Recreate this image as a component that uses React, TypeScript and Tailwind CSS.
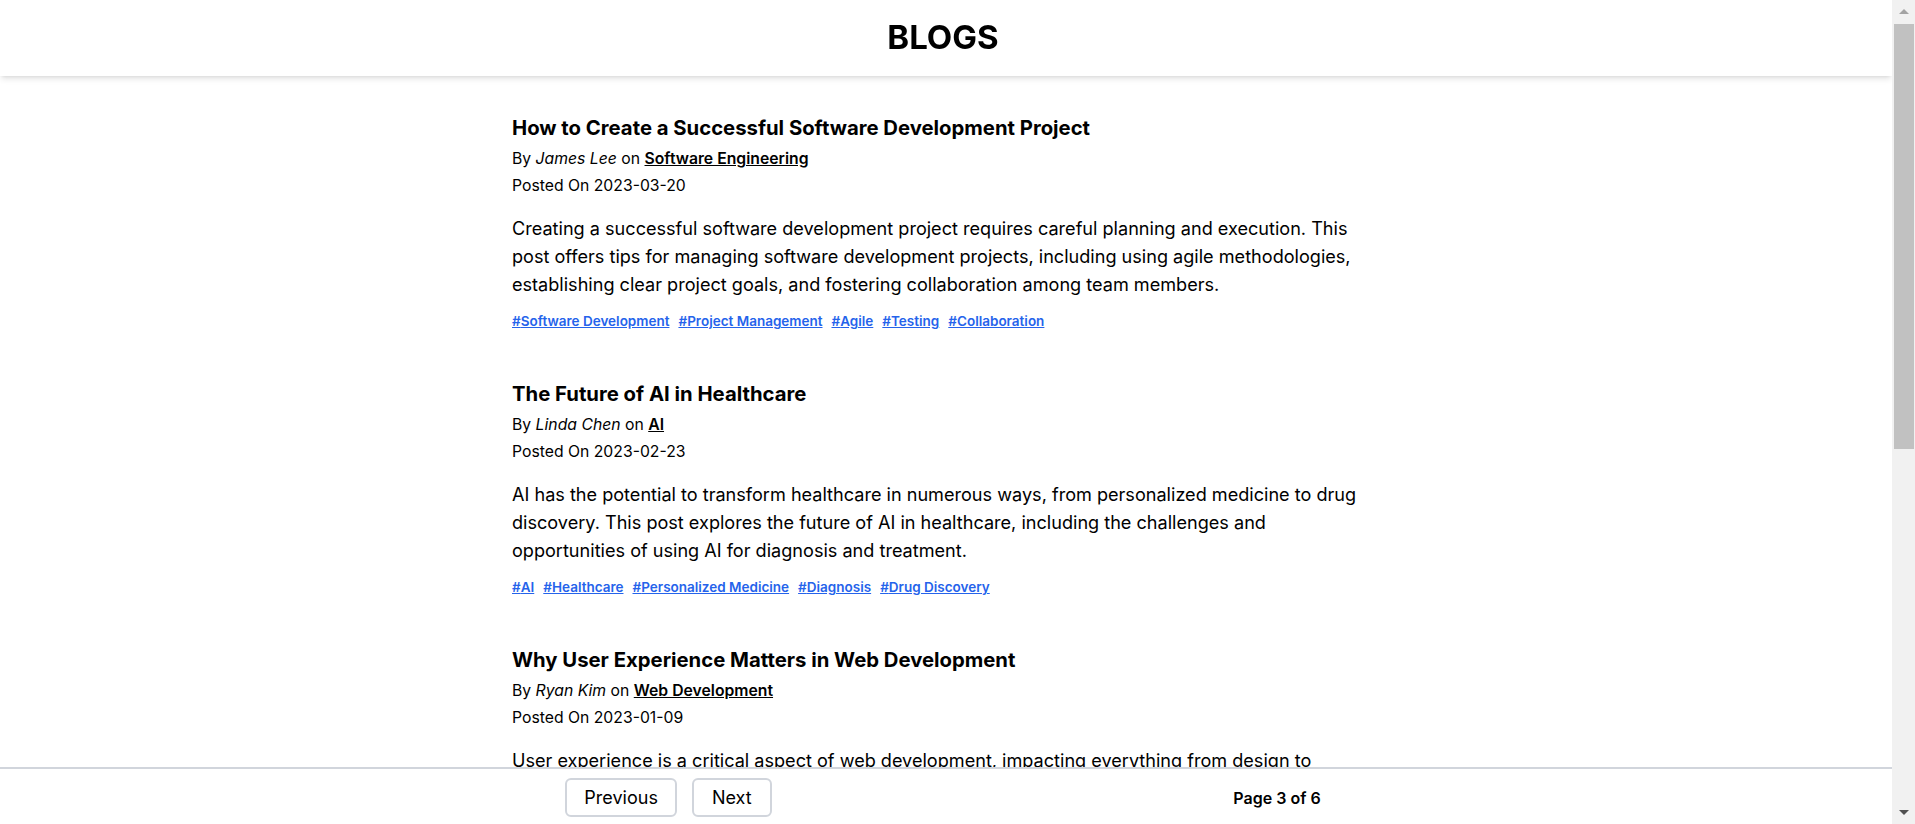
import React from "react";

type Post = {
  title: string;
  author: string;
  category: string;
  date: string;
  body: string;
  tags: string[];
};

const posts: Post[] = [
  {
    title: "How to Create a Successful Software Development Project",
    author: "James Lee",
    category: "Software Engineering",
    date: "2023-03-20",
    body: "Creating a successful software development project requires careful planning and execution. This post offers tips for managing software development projects, including using agile methodologies, establishing clear project goals, and fostering collaboration among team members.",
    tags: ["Software Development", "Project Management", "Agile", "Testing", "Collaboration"],
  },
  {
    title: "The Future of AI in Healthcare",
    author: "Linda Chen",
    category: "AI",
    date: "2023-02-23",
    body: "AI has the potential to transform healthcare in numerous ways, from personalized medicine to drug discovery. This post explores the future of AI in healthcare, including the challenges and opportunities of using AI for diagnosis and treatment.",
    tags: ["AI", "Healthcare", "Personalized Medicine", "Diagnosis", "Drug Discovery"],
  },
  {
    title: "Why User Experience Matters in Web Development",
    author: "Ryan Kim",
    category: "Web Development",
    date: "2023-01-09",
    body: "User experience is a critical aspect of web development, impacting everything from design to functionality. This post discusses the importance of user experience, including how to conduct user research, create user personas, and design intuitive interfaces.",
    tags: ["User Experience", "Web Development", "Design", "Usability", "User Research"],
  },
  {
    title: "Getting Started with Cloud Computing",
    author: "Sarah Patel",
    category: "Cloud",
    date: "2022-12-14",
    body: "Cloud computing has changed the way businesses build and run software. This post introduces the core concepts of cloud computing, including infrastructure as a service, platform as a service, and tips for choosing the right provider for your team.",
    tags: ["Cloud Computing", "AWS", "Azure", "DevOps", "Infrastructure"],
  },
  {
    title: "Best Practices for Writing Clean Code",
    author: "Michael Brown",
    category: "Programming",
    date: "2022-11-30",
    body: "Clean code is easier to read, maintain, and extend. This post covers best practices for writing clean code, including meaningful naming, small focused functions, consistent formatting, and the value of code reviews and automated testing.",
    tags: ["Clean Code", "Best Practices", "Refactoring", "Code Review", "Testing"],
  },
];

function PostItem({ post }: { post: Post }) {
  return (
    <article className="mb-[49px]">
      <h2 className="text-[20.3px] leading-7 font-bold">{post.title}</h2>
      <p className="mt-[3px] text-[15.75px] leading-[27px]">
        By <em>{post.author}</em> on{" "}
        <a href="#" className="font-semibold underline">
          {post.category}
        </a>
      </p>
      <p className="text-[15.75px] leading-[27px]">Posted On {post.date}</p>
      <p className="mt-[15px] text-[18.1px] leading-7">{post.body}</p>
      <div className="mt-[13px] flex flex-wrap gap-x-[9px] text-[13.5px] leading-5 font-semibold">
        {post.tags.map((t) => (
          <a key={t} href="#" className="text-[#2563eb] underline">
            #{t}
          </a>
        ))}
      </div>
    </article>
  );
}

export default function App() {
  return (
    <div className="flex h-[824px] w-full font-['Inter',sans-serif] text-black">
      <div className="h-full min-w-0 flex-1 overflow-y-scroll bg-white [scrollbar-width:none]">
        <header className="sticky top-0 z-10 flex h-[76px] items-center justify-center bg-white pr-[6px] pb-[2px] shadow-md">
          <h1 className="text-[33px] leading-10 font-bold">BLOGS</h1>
        </header>
        <main className="pr-[6px] pt-[38px]">
          <div className="mx-auto w-[862px]">
            {posts.map((p) => (
              <PostItem key={p.title} post={p} />
            ))}
          </div>
        </main>
        <footer className="sticky bottom-0 z-10 border-t-2 border-gray-300 bg-white pr-[6px] pt-[9px] pb-[7px]">
          <div className="mx-auto flex w-[1217px] items-center justify-around">
            <div className="flex gap-[15px]">
              <button className="h-[39px] rounded-md border-2 border-gray-300 bg-white px-[17px] text-lg">
                Previous
              </button>
              <button className="h-[39px] rounded-md border-2 border-gray-300 bg-white px-[18px] text-lg">
                Next
              </button>
            </div>
            <span className="text-base font-semibold">Page 3 of 6</span>
          </div>
        </footer>
      </div>
      <div className="flex h-full w-[23px] shrink-0 flex-col bg-[#f1f1f1]">
        <div className="flex h-[23px] items-center justify-center">
          <svg width="10" height="5" viewBox="0 0 10 5">
            <polygon points="5,0 10,5 0,5" fill="#a3a3a3" />
          </svg>
        </div>
        <div className="mt-[1px] ml-[2px] mr-[1px] h-[425px] bg-[#c1c1c1]" />
        <div className="flex-1" />
        <div className="flex h-[23px] items-center justify-center">
          <svg width="10" height="5" viewBox="0 0 10 5">
            <polygon points="0,0 10,0 5,5" fill="#505050" />
          </svg>
        </div>
      </div>
    </div>
  );
}
